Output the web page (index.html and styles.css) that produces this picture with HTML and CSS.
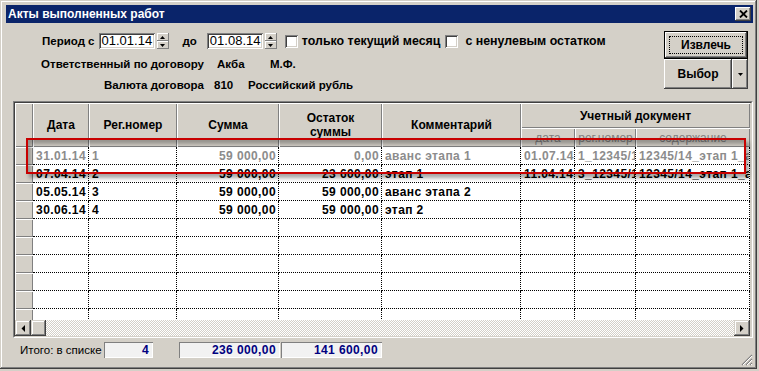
FILE: index.html
```html
<!DOCTYPE html>
<html lang="ru">
<head>
    <meta charset="UTF-8">
    <meta name="viewport" content="width=device-width, initial-scale=1.0">
    <title>Акты выполненных работ</title>
    <link rel="stylesheet" href="styles.css">
</head>
<body>
    <div class="window">
        <div class="titlebar">
            <span class="title">Акты выполненных работ</span>
            <button class="close-btn">
                <svg width="9" height="8" viewBox="0 0 9 8"><path d="M1 0.5L8 7.5M8 0.5L1 7.5" stroke="#000" stroke-width="1.8" fill="none"/></svg>
            </button>
        </div>

        <div class="toolbar">
            <div class="filters">
                <div class="period-row">
                    <span class="label period-label">Период с</span>
                    <span class="date-input">01.01.14</span>
                    <span class="spin">
                        <span class="spin-btn"><svg width="5" height="3"><path d="M0 3h5L2.5 0z"/></svg></span>
                        <span class="spin-btn"><svg width="5" height="3"><path d="M0 0h5L2.5 3z"/></svg></span>
                    </span>
                    <span class="label to-label">до</span>
                    <span class="date-input">01.08.14</span>
                    <span class="spin">
                        <span class="spin-btn"><svg width="5" height="3"><path d="M0 3h5L2.5 0z"/></svg></span>
                        <span class="spin-btn"><svg width="5" height="3"><path d="M0 0h5L2.5 3z"/></svg></span>
                    </span>
                    <span class="check first"></span>
                    <span class="label check-label">только текущий месяц</span>
                    <span class="check second"></span>
                    <span class="label check-label wide">с ненулевым остатком</span>
                </div>
                <div class="info-row owner">
                    <span class="label info-label">Ответственный по договору</span>
                    <span class="label owner-name">Акба</span>
                    <span class="label">М.Ф.</span>
                </div>
                <div class="info-row currency">
                    <span class="label info-label">Валюта договора</span>
                    <span class="label currency-code">810</span>
                    <span class="label">Российский рубль</span>
                </div>
            </div>

            <div class="actions">
                <button class="btn btn-default"><span class="focus">Извлечь</span></button>
                <div class="split">
                    <button class="btn split-main">Выбор</button>
                    <button class="btn split-arrow"><svg width="5" height="3"><path d="M0 0h5L2.5 3z"/></svg></button>
                </div>
            </div>
        </div>

        <div class="grid">
            <div class="grid-inner">
                <div class="grid-view">
                    <table class="acts">
                        <colgroup>
                            <col style="width:18px">
                            <col style="width:56px">
                            <col style="width:88px">
                            <col style="width:102px">
                            <col style="width:103px">
                            <col style="width:139px">
                            <col style="width:54px">
                            <col style="width:61px">
                            <col style="width:114px">
                        </colgroup>
                        <thead>
                            <tr class="head-top">
                                <th rowspan="2" class="ind"></th>
                                <th rowspan="2">Дата</th>
                                <th rowspan="2">Рег.номер</th>
                                <th rowspan="2">Сумма</th>
                                <th rowspan="2" class="two-line">Остаток<br>суммы</th>
                                <th rowspan="2">Комментарий</th>
                                <th colspan="3">Учетный документ</th>
                            </tr>
                            <tr class="head-sub">
                                <th class="sub">дата</th>
                                <th class="sub">рег.номер</th>
                                <th class="sub">содержание</th>
                            </tr>
                        </thead>
                        <tbody>
                            <tr class="closed">
                                <td class="ind"></td>
                                <td class="num">31.01.14</td>
                                <td>1</td>
                                <td class="num">59 000,00</td>
                                <td class="num">0,00</td>
                                <td>аванс этапа 1</td>
                                <td class="num">01.07.14</td>
                                <td>1_12345/14</td>
                                <td>12345/14_этап 1_аванс</td>
                            </tr>
                            <tr>
                                <td class="ind"></td>
                                <td class="num">07.04.14</td>
                                <td>2</td>
                                <td class="num">59 000,00</td>
                                <td class="num">23 600,00</td>
                                <td>этап 1</td>
                                <td class="num">11.04.14</td>
                                <td>3_12345/14</td>
                                <td>12345/14_этап 1_акт</td>
                            </tr>
                            <tr>
                                <td class="ind"></td>
                                <td class="num">05.05.14</td>
                                <td>3</td>
                                <td class="num">59 000,00</td>
                                <td class="num">59 000,00</td>
                                <td>аванс этапа 2</td>
                                <td></td><td></td><td></td>
                            </tr>
                            <tr>
                                <td class="ind"></td>
                                <td class="num">30.06.14</td>
                                <td>4</td>
                                <td class="num">59 000,00</td>
                                <td class="num">59 000,00</td>
                                <td>этап 2</td>
                                <td></td><td></td><td></td>
                            </tr>
                            <tr><td class="ind"></td><td></td><td></td><td></td><td></td><td></td><td></td><td></td><td></td></tr>
                            <tr><td class="ind"></td><td></td><td></td><td></td><td></td><td></td><td></td><td></td><td></td></tr>
                            <tr><td class="ind"></td><td></td><td></td><td></td><td></td><td></td><td></td><td></td><td></td></tr>
                            <tr><td class="ind"></td><td></td><td></td><td></td><td></td><td></td><td></td><td></td><td></td></tr>
                            <tr><td class="ind"></td><td></td><td></td><td></td><td></td><td></td><td></td><td></td><td></td></tr>
                            <tr><td class="ind"></td><td></td><td></td><td></td><td></td><td></td><td></td><td></td><td></td></tr>
                        </tbody>
                    </table>
                </div>

                <div class="hscroll">
                    <span class="sb-btn"><svg width="4" height="7"><path d="M4 0v7L0.5 3.5z"/></svg></span>
                    <span class="sb-thumb"></span>
                    <span class="sb-track"></span>
                    <span class="sb-btn"><svg width="4" height="7"><path d="M0 0v7L3.5 3.5z"/></svg></span>
                </div>
            </div>

            <!-- пометка поверх таблицы -->
            <div class="mark"></div>
        </div>

        <div class="totals">
            <span class="totals-label">Итого: в списке</span>
            <span class="total-box count">4</span>
            <span class="total-box sum">236 000,00</span>
            <span class="total-box rest">141 600,00</span>
        </div>

        <svg class="grip" width="12" height="12" viewBox="0 0 12 12">
            <path d="M11 1L1 11M11 5L5 11M11 9L9 11" stroke="#808080" stroke-width="1.2"/>
            <path d="M11 2L2 11M11 6L6 11M11 10L10 11" stroke="#fff" stroke-width="1"/>
        </svg>
    </div>
</body>
</html>
```

FILE: styles.css
```css
:root {
    --face: #d4d0c8;
    --shadow: #808080;
    --dark: #404040;
    --light: #ffffff;
    --title: #0a246a;
    --navy: #000080;
    --mark: #c80000;
}

* {
    margin: 0;
    padding: 0;
    box-sizing: border-box;
}

body {
    background: var(--face);
    font-family: "Liberation Sans", Arial, sans-serif;
    font-size: 12px;
    color: #000;
}

.window {
    position: relative;
    width: 757px;
    height: 369px;
    padding: 5px 4px 4px 6px;
    background: var(--face);
    box-shadow: inset -1px -1px var(--dark), inset 1px 1px var(--face),
                inset -2px -2px var(--shadow), inset 2px 2px var(--light);
}

/* заголовок окна */
.titlebar {
    height: 18px;
    background: var(--title);
    display: flex;
    align-items: center;
    justify-content: space-between;
    padding: 0 2px;
}

.title {
    color: #fff;
    font-weight: bold;
    font-size: 12px;
}

.close-btn {
    width: 16px;
    height: 14px;
    border: none;
    background: var(--face);
    display: flex;
    align-items: center;
    justify-content: center;
    box-shadow: inset -1px -1px var(--dark), inset 1px 1px var(--light),
                inset -2px -2px var(--shadow);
}

/* фильтры и кнопки */
.toolbar {
    height: 78px;
    display: flex;
    justify-content: space-between;
}

.filters {
    padding: 10px 0 0 34px;
}

.label {
    font-weight: bold;
    font-size: 11.5px;
    line-height: 16px;
    white-space: nowrap;
}

.period-row {
    display: flex;
    align-items: center;
    height: 16px;
}

.period-label {
    margin-left: 2px;
    margin-right: 4px;
}

.date-input {
    width: 56px;
    height: 16px;
    background: #fff;
    font-size: 13px;
    line-height: 16px;
    padding-left: 3px;
    box-shadow: inset 1px 1px var(--shadow), inset -1px -1px var(--light),
                inset 2px 2px var(--dark), inset -2px -2px var(--face);
}

.spin {
    display: flex;
    flex-direction: column;
    margin-left: 2px;
    width: 12px;
    height: 16px;
}

.spin-btn {
    height: 8px;
    display: flex;
    align-items: center;
    justify-content: center;
    background: var(--face);
    box-shadow: inset -1px -1px var(--shadow), inset 1px 1px var(--light);
}

.to-label {
    margin: 0 10px 0 14px;
}

.check {
    width: 13px;
    height: 13px;
    background: #fff;
    box-shadow: inset 1px 1px var(--shadow), inset -1px -1px var(--light),
                inset 2px 2px var(--dark), inset -2px -2px var(--face);
}

.check.first {
    margin-left: 8px;
}

.check.second {
    margin-left: 5px;
}

.check-label {
    margin-left: 4px;
    font-size: 12.4px;
}

.check-label.wide {
    margin-left: 7px;
}

.info-row {
    display: flex;
    height: 16px;
}

.info-row.owner {
    margin-top: 7px;
}

.info-row.currency {
    margin-top: 5px;
}

.info-label {
    width: 164px;
    text-align: right;
}

.owner-name {
    margin-left: 13px;
    width: 53px;
}

.currency-code {
    margin-left: 10px;
    width: 34px;
}

.actions {
    width: 84px;
    margin: 8px 5px 0 0;
    display: flex;
    flex-direction: column;
}

.btn {
    border: none;
    background: var(--face);
    font-family: "Liberation Sans", Arial, sans-serif;
    font-weight: bold;
    font-size: 12px;
    color: #000;
    display: flex;
    align-items: center;
    justify-content: center;
    box-shadow: inset -1px -1px var(--dark), inset 1px 1px var(--light),
                inset -2px -2px var(--shadow);
}

.btn-default {
    height: 28px;
    padding: 4px;
    border: 1px solid #000;
}

.focus {
    flex: 1;
    align-self: stretch;
    display: flex;
    align-items: center;
    justify-content: center;
    border: 1px dotted #000;
}

.split {
    display: flex;
    height: 30px;
}

.split-main {
    flex: 1;
}

.split-arrow {
    width: 16px;
}

/* таблица актов */
.grid {
    position: relative;
    width: 740px;
    height: 237px;
    margin-left: 7px;
    border: 1px solid;
    border-color: var(--shadow) var(--light) var(--light) var(--shadow);
}

.grid-inner {
    height: 235px;
    border: 1px solid;
    border-color: var(--dark) var(--face) var(--face) var(--dark);
    background: var(--face);
}

.grid-view {
    height: 217px;
    overflow: hidden;
}

.acts {
    width: 735px;
    table-layout: fixed;
    border-collapse: separate;
    border-spacing: 0;
}

.acts th {
    background: var(--face);
    font-weight: bold;
    font-size: 12px;
    text-align: center;
    vertical-align: middle;
    box-shadow: inset 1px 1px var(--light), inset -1px -1px var(--shadow);
    white-space: nowrap;
}

.head-top {
    height: 25px;
}

.head-sub {
    height: 19px;
}

.acts th.two-line {
    line-height: 14px;
}

.acts th.sub {
    font-weight: normal;
    color: var(--shadow);
}

.acts tbody tr {
    height: 18px;
}

.acts td {
    background: #fff;
    font-weight: bold;
    font-size: 12px;
    letter-spacing: 0.4px;
    padding: 0 3px;
    white-space: nowrap;
    overflow: hidden;
    border-right: 1px dotted #000;
    border-bottom: 1px dotted #000;
}

.acts td.num {
    text-align: right;
    padding-right: 2px;
}

.acts td.ind {
    background: var(--face);
    border: none;
    box-shadow: inset 1px 1px var(--light), inset -1px -1px var(--shadow);
}

.acts tr.closed td {
    color: #8c8c8c;
}

.hscroll {
    display: flex;
    width: 735px;
    height: 16px;
}

.sb-btn,
.sb-thumb {
    background: var(--face);
    box-shadow: inset -1px -1px var(--dark), inset 1px 1px var(--face),
                inset -2px -2px var(--shadow), inset 2px 2px var(--light);
}

.sb-btn {
    width: 16px;
    display: flex;
    align-items: center;
    justify-content: center;
}

.sb-thumb {
    width: 15px;
}

.sb-track {
    flex: 1;
    background: repeating-conic-gradient(var(--face) 0 25%, #fff 0 50%) 0 0 / 2px 2px;
}

.mark {
    position: absolute;
    left: 12px;
    top: 36px;
    width: 720px;
    height: 36px;
    border: 2px solid var(--mark);
    box-shadow: 3px 4px 4px rgba(0, 0, 0, 0.35), inset 3px 4px 4px rgba(0, 0, 0, 0.3);
}

/* итоги */
.totals {
    display: flex;
    align-items: center;
    margin-top: 4px;
    padding-left: 14px;
    height: 16px;
}

.totals-label {
    width: 84px;
    font-size: 11.5px;
}

.total-box {
    height: 16px;
    background: #f2f2f2;
    color: var(--navy);
    font-weight: bold;
    font-size: 12px;
    letter-spacing: 0.4px;
    line-height: 16px;
    text-align: right;
    padding-right: 4px;
    box-shadow: inset 1px 1px var(--shadow), inset -1px -1px var(--light);
}

.total-box.count {
    width: 49px;
}

.total-box.sum {
    width: 101px;
    margin-left: 26px;
}

.total-box.rest {
    width: 101px;
    margin-left: 1px;
}

.grip {
    position: absolute;
    right: 4px;
    bottom: 3px;
}
```
